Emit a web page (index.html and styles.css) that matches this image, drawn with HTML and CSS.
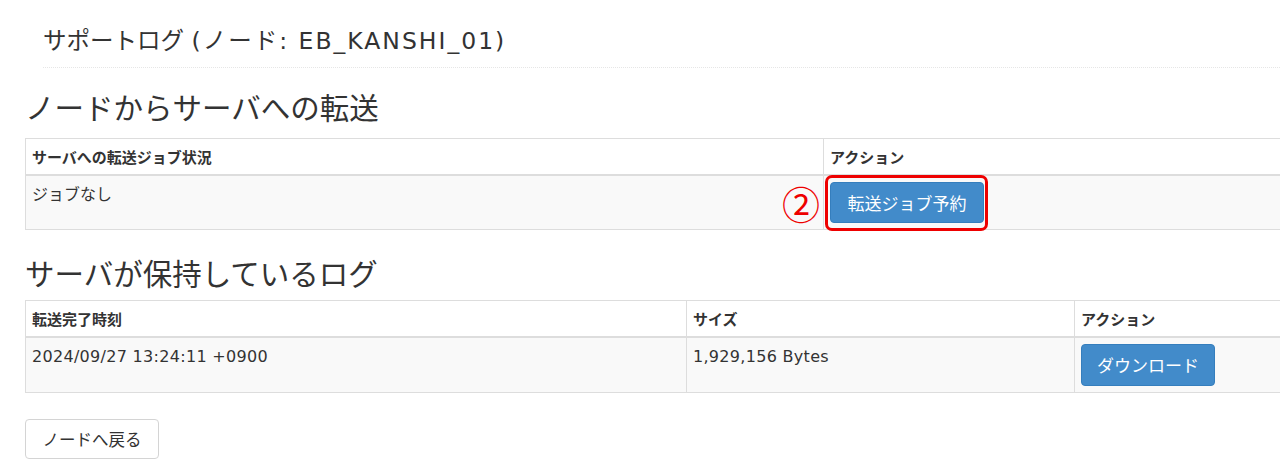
FILE: index.html
```html
<!DOCTYPE html>
<html lang="ja">
<head>
<meta charset="utf-8">
<title>サポートログ</title>
<link rel="stylesheet" href="styles.css">
</head>
<body>
<div class="page">
  <div class="page-header">
    <h1 class="title">サポートログ <span class="title-node">(ノード: EB_KANSHI_01)</span></h1>
  </div>

  <h3 class="section-title first">ノードからサーバへの転送</h3>
  <table class="data-table">
    <colgroup>
      <col class="col-status">
      <col>
    </colgroup>
    <thead>
      <tr>
        <th>サーバへの転送ジョブ状況</th>
        <th>アクション</th>
      </tr>
    </thead>
    <tbody>
      <tr>
        <td>ジョブなし</td>
        <td class="action-cell">
          <span class="highlight">
            <span class="step-mark">②</span>
            <button class="btn btn-primary btn-reserve" type="button">転送ジョブ予約</button>
          </span>
        </td>
      </tr>
    </tbody>
  </table>

  <h3 class="section-title">サーバが保持しているログ</h3>
  <table class="data-table">
    <colgroup>
      <col class="col-time">
      <col class="col-size">
      <col>
    </colgroup>
    <thead>
      <tr>
        <th>転送完了時刻</th>
        <th>サイズ</th>
        <th>アクション</th>
      </tr>
    </thead>
    <tbody>
      <tr>
        <td class="latin">2024/09/27 13:24:11 +0900</td>
        <td class="latin">1,929,156 Bytes</td>
        <td class="action-cell">
          <button class="btn btn-primary btn-download" type="button">ダウンロード</button>
        </td>
      </tr>
    </tbody>
  </table>

  <div class="footer-actions">
    <button class="btn btn-default btn-back" type="button">ノードへ戻る</button>
  </div>
</div>
</body>
</html>
```

FILE: styles.css
```css
* {
  box-sizing: border-box;
}

html, body {
  margin: 0;
  padding: 0;
  background: #ffffff;
}

body {
  font-family: "DejaVu Sans", "Noto Sans CJK JP", sans-serif;
  color: #333333;
  font-size: 16px;
  line-height: 21px;
  overflow: hidden;
}

.page {
  padding-left: 25px;
  width: 1300px;
}

.page-header {
  margin-left: 18px;
  padding-top: 25px;
  padding-bottom: 10px;
  border-bottom: 1px dotted #e6e6e6;
}

.title {
  margin: 0;
  font-family: "DejaVu Sans", "Noto Sans CJK JP", sans-serif;
  font-size: 23.5px;
  line-height: 32px;
  font-weight: 400;
  color: #333333;
}

.title-node {
  letter-spacing: 2px;
}

.section-title {
  margin: 24px 0 10px;
  font-family: "Noto Sans CJK JP", sans-serif;
  font-size: 29.5px;
  line-height: 36px;
  font-weight: 400;
  color: #333333;
}

.section-title.first {
  margin-top: 20px;
  margin-bottom: 14px;
}

.data-table {
  width: 1275px;
  border-collapse: collapse;
  table-layout: fixed;
}

.col-status {
  width: 798px;
}

.col-time {
  width: 661px;
}

.col-size {
  width: 388px;
}

.data-table th,
.data-table td {
  border: 1px solid #dddddd;
  text-align: left;
  vertical-align: top;
  padding: 8px 6px;
}

.data-table th {
  font-family: "Noto Sans CJK JP", sans-serif;
  font-weight: 700;
  font-size: 15px;
  line-height: 19px;
  border-bottom: 2px solid #dddddd;
  background: #ffffff;
}

.data-table tbody td {
  background: #f9f9f9;
  height: 53px;
}

.data-table td.latin {
  letter-spacing: 0.3px;
}

.data-table td.action-cell {
  padding: 6px 6px;
}

.btn {
  display: inline-block;
  font-family: "Noto Sans CJK JP", "Noto Sans", sans-serif;
  font-size: 17px;
  line-height: 22px;
  border-radius: 4px;
  border: 1px solid transparent;
  cursor: pointer;
  margin: 0;
}

.btn-primary {
  background: #428bca;
  border-color: #357ebd;
  color: #ffffff;
}

.btn-reserve {
  width: 154px;
  height: 41px;
  padding: 0;
}

.btn-download {
  width: 134px;
  height: 42px;
  padding: 0;
}

.btn-default {
  background: #ffffff;
  border-color: #d4d4d4;
  color: #333333;
}

.btn-back {
  width: 134px;
  height: 40px;
  padding: 0;
  font-size: 16.5px;
}

.highlight {
  position: relative;
  display: inline-block;
}

.highlight::after {
  content: "";
  position: absolute;
  left: -5px;
  top: -7px;
  right: -4px;
  bottom: -8px;
  border: 3px solid #ee0000;
  border-radius: 7px;
  pointer-events: none;
}

.step-mark {
  position: absolute;
  right: calc(100% + 10px);
  top: 1px;
  color: #ee0000;
  font-size: 38px;
  line-height: 40px;
  font-family: "Noto Sans CJK JP", sans-serif;
}

.footer-actions {
  margin-top: 26px;
}
```
